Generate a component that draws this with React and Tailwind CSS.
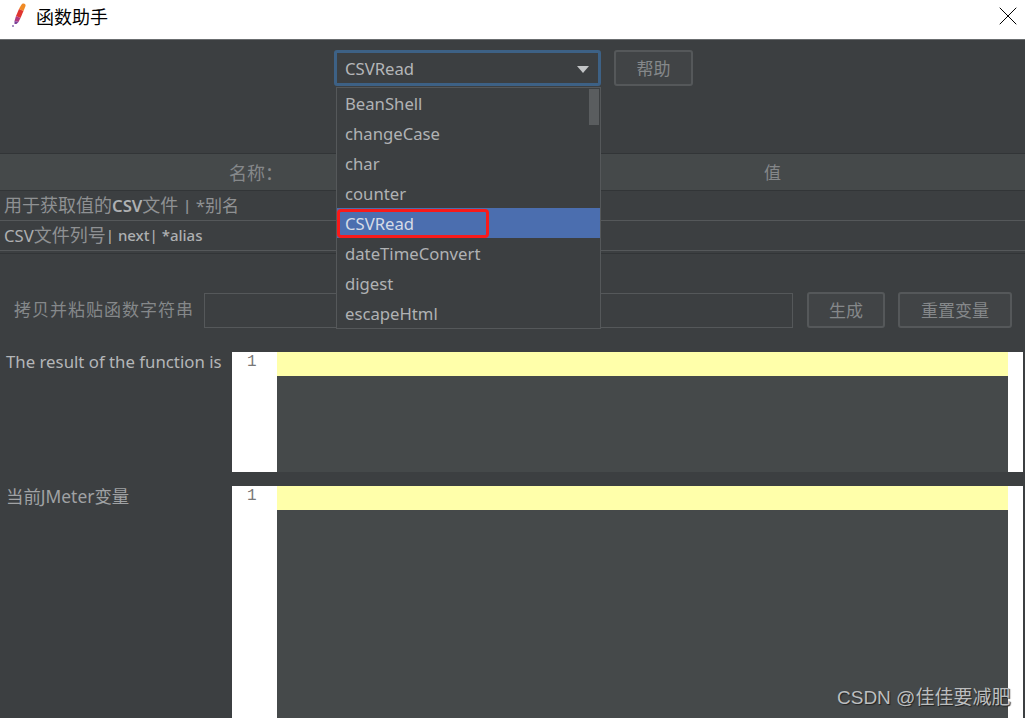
import { X } from "lucide-react";

const items = ["BeanShell", "changeCase", "char", "counter", "CSVRead", "dateTimeConvert", "digest", "escapeHtml"];

function DarkButton({ className, children }) {
  return (
    <div className={`flex items-center justify-center h-[36px] pt-[1px] rounded-[3px] border-2 border-[#55585a] bg-[#414446] text-[#85888a] text-[17px] ${className}`}>
      {children}
    </div>
  );
}

function Editor({ className }) {
  return (
    <div className={`flex flex-1 bg-white pr-[15px] ${className}`}>
      <div className="w-[45px] pl-[15px] text-[16px] leading-[21px] text-[#777] font-['Liberation_Mono',monospace]">1</div>
      <div className="flex-1 bg-[#45494a]">
        <div className="h-[24px] bg-[#ffffaa]"></div>
      </div>
    </div>
  );
}

export default function App() {
  return (
    <div className="relative w-[1025px] h-[718px] overflow-hidden bg-[#3c3f41] font-['Noto_Sans','Noto_Sans_CJK_SC',sans-serif]">
      {/* title bar */}
      <div className="flex items-center h-[40px] bg-white border-b border-[#6b6e70]">
        <svg className="ml-[11px] w-[16px] h-[24px] -mt-[9px]" viewBox="0 0 16 24">
          <path d="M11 1 C13 0 15 1 14.5 3 L12.5 8 L8 6 C9 4 10 2 11 1Z" fill="#f08a24" />
          <path d="M8 6 L12.5 8 L9.5 15 L5 13Z" fill="#e0352f" />
          <path d="M5 13 L9.5 15 L7.5 19 L3.5 18Z" fill="#b03a7e" />
          <path d="M3.5 18 L7.5 19 L5.5 21 L3.5 21Z" fill="#7a3f98" />
          <circle cx="2" cy="23" r="1" fill="#8a70b0" />
        </svg>
        <span className="ml-[9px] -mt-[6px] text-[18px] text-black font-['Noto_Sans_CJK_SC',sans-serif]">函数助手</span>
        <X className="ml-auto mr-[1px] -mt-[7px] w-[32px] h-[32px] text-black" strokeWidth={0.75} />
      </div>

      {/* function selector */}
      <div className="flex justify-center gap-[13px] h-[113px] pt-[10px] pl-[2px]">
        <div className="flex items-center justify-between w-[267px] h-[36px] rounded-[3px] border-[3px] border-[#3d6185] bg-[#3c3f41] pl-[8px] pr-[9px] pt-[2px] text-[16.7px] text-[#b4b6b8]">
          CSVRead
          <div className="w-0 h-0 border-x-[6px] border-x-transparent border-t-[7px] border-t-[#c2c4c6]"></div>
        </div>
        <DarkButton className="w-[79px]">帮助</DarkButton>
      </div>

      {/* arguments table */}
      <div className="grid grid-cols-[500px_1fr] items-center h-[38px] pt-[2px] bg-[#45494a] border-y border-[#323537] text-[18px] text-[#85888a]">
        <div className="text-center pl-[12px]">名称：</div>
        <div className="text-center pl-[20px] text-[17px]">值</div>
      </div>
      <div className="flex items-center h-[30px] pl-[4px] border-b border-[#55585a] text-[18px] text-[#8f9193] whitespace-pre">
        用于获取值的<span className="text-[16.7px] font-semibold text-[#aeb0b2]">CSV</span>文件 <span className="text-[15px] font-semibold">|</span><span className="text-[17px]"> *别名</span>
      </div>
      <div className="flex items-center h-[30px] pl-[4px] border-b border-[#55585a] text-[16.7px] text-[#aeb0b2] whitespace-pre">
        CSV<span className="text-[18px] text-[#8f9193]">文件列号</span><span className="text-[15px] font-medium">| next| *alias</span>
      </div>
      <div className="h-[3px] border-b border-[#323537]"></div>

      {/* copy / paste row */}
      <div className="flex items-center h-[36px] mt-[38px] pl-[14px]">
        <span className="w-[190px] text-[17px] tracking-[1px] text-[#85888a]">拷贝并粘贴函数字符串</span>
        <div className="w-[589px] h-[35px] border border-[#55585a]"></div>
        <DarkButton className="w-[78px] ml-[14px]">生成</DarkButton>
        <DarkButton className="w-[114px] ml-[13px]">重置变量</DarkButton>
      </div>

      {/* output areas */}
      <div className="flex h-[120px] mt-[24px] pl-[6px] pr-[2px]">
        <span className="w-[226px] text-[16.8px] leading-[20px] text-[#b4b6b8]">The result of the function is</span>
        <Editor />
      </div>
      <div className="flex h-[232px] mt-[14px] pl-[6px] pr-[2px]">
        <span className="w-[226px] text-[17.4px] leading-[20px] text-[#a0a2a4]">当前JMeter变量</span>
        <Editor />
      </div>

      {/* open combo popup */}
      <div className="absolute left-[336px] top-[87px] w-[265px] h-[242px] bg-[#3c3f41] border border-[#55585a]">
        {items.map((item) => (
          <div
            key={item}
            className={`flex items-center h-[30px] pl-[8px] pt-[2px] text-[16.7px] ${item === "CSVRead" ? "bg-[#4b6eaf] text-[#d5dbe6]" : "text-[#b0b2b4]"}`}
          >
            {item}
          </div>
        ))}
        <div className="absolute right-[1px] top-[1px] w-[10px] h-[36px] bg-[#5a5d5f]"></div>
      </div>

      {/* red annotation */}
      <div className="absolute left-[337px] top-[209px] w-[152px] h-[29px] rounded-[4px] border-[3px] border-[#f91a1a]"></div>

      {/* watermark */}
      <div className="absolute left-[837px] top-[686px] text-[19px] leading-[24px] text-[#bcbebf] [text-shadow:1px_1px_1px_#222] font-['Liberation_Sans','Noto_Sans_CJK_SC',sans-serif]">
        CSDN @佳佳要减肥
      </div>
    </div>
  );
}
